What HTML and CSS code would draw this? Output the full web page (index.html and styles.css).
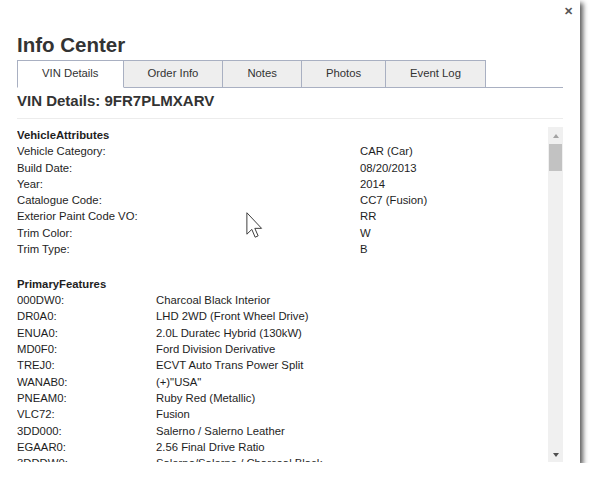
FILE: index.html
```html
<!DOCTYPE html>
<html lang="en">
<head>
    <meta charset="UTF-8">
    <title>Info Center</title>
    <link rel="stylesheet" href="styles.css">
</head>
<body>
    <div class="dialog">
        <span class="close">&#x2715;</span>
        <h1 class="title">Info Center</h1>
        <ul class="tabs">
            <li class="tab active">VIN Details</li>
            <li class="tab">Order Info</li>
            <li class="tab">Notes</li>
            <li class="tab">Photos</li>
            <li class="tab">Event Log</li>
        </ul>
        <h2 class="vin">VIN Details: 9FR7PLMXARV</h2>
        <div class="scroll">
            <div class="scroll-content">
                <div class="section attrs">
                    <div class="section-title">VehicleAttributes</div>
                    <div class="rows">
                        <span>Vehicle Category:</span><span>CAR (Car)</span>
                        <span>Build Date:</span><span>08/20/2013</span>
                        <span>Year:</span><span>2014</span>
                        <span>Catalogue Code:</span><span>CC7 (Fusion)</span>
                        <span>Exterior Paint Code VO:</span><span>RR</span>
                        <span>Trim Color:</span><span>W</span>
                        <span>Trim Type:</span><span>B</span>
                    </div>
                </div>
                <div class="section features">
                    <div class="section-title">PrimaryFeatures</div>
                    <div class="rows">
                        <span>000DW0:</span><span>Charcoal Black Interior</span>
                        <span>DR0A0:</span><span>LHD 2WD (Front Wheel Drive)</span>
                        <span>ENUA0:</span><span>2.0L Duratec Hybrid (130kW)</span>
                        <span>MD0F0:</span><span>Ford Division Derivative</span>
                        <span>TREJ0:</span><span>ECVT Auto Trans Power Split</span>
                        <span>WANAB0:</span><span>(+)"USA"</span>
                        <span>PNEAM0:</span><span>Ruby Red (Metallic)</span>
                        <span>VLC72:</span><span>Fusion</span>
                        <span>3DD000:</span><span>Salerno / Salerno Leather</span>
                        <span>EGAAR0:</span><span>2.56 Final Drive Ratio</span>
                        <span>3DDDW0:</span><span>Salerno/Salerno / Charcoal Black</span>
                    </div>
                </div>
            </div>
            <div class="scrollbar">
                <span class="arrow up"></span>
                <span class="thumb"></span>
                <span class="track-fill"></span>
                <span class="arrow down"></span>
            </div>
        </div>
        <svg class="cursor" width="19" height="27" viewBox="0 0 12.5 18">
            <path d="M0.5 0.5 L0.5 14.8 L3.8 11.6 L6 16.8 L8 15.9 L5.8 10.9 L10.3 10.9 Z" fill="#fff" stroke="#3a3a3a" stroke-width="0.65" stroke-linejoin="miter"/>
        </svg>
    </div>
</body>
</html>
```

FILE: styles.css
```css
* {
    box-sizing: border-box;
}
body {
    margin: 0;
    background-color: #ffffff;
    font-family: "Liberation Sans", Arial, sans-serif;
    color: #1e1e1e;
}
.dialog {
    position: relative;
    width: 580px;
    height: 463px;
    padding: 33px 17px 1px 17px;
    background-color: #ffffff;
    box-shadow: 3px 3px 5px rgba(0,0,0,0.65);
    display: flex;
    flex-direction: column;
}
.close {
    position: absolute;
    top: 5px;
    right: 7px;
    font-size: 11px;
    font-weight: bold;
    color: #555;
}
.title {
    margin: 0;
    font-size: 20.5px;
    line-height: 24px;
    font-weight: bold;
    color: #333;
}
.tabs {
    display: flex;
    margin: 3px 0 0 0;
    padding: 0;
    list-style: none;
    border-bottom: 1px solid #a9b0c2;
}
.tab {
    height: 28px;
    margin-bottom: -1px;
    padding: 0 24px 2px 24px;
    border: 1px solid #a9b0c2;
    border-left: none;
    background-color: #eeeeee;
    font-size: 11.3px;
    line-height: 24px;
    white-space: nowrap;
    color: #333;
}
.tab:first-child {
    border-left: 1px solid #a9b0c2;
}
.tab.active {
    background-color: #ffffff;
    border-bottom-color: #ffffff;
}
.vin {
    margin: 4px 0 0 0;
    padding-bottom: 8px;
    border-bottom: 1px solid #ececec;
    font-size: 15px;
    line-height: 18px;
    font-weight: bold;
    color: #333;
}
.scroll {
    flex: 1;
    margin-top: 8px;
    display: flex;
    overflow: hidden;
}
.scroll-content {
    flex: 1;
    overflow: hidden;
    font-size: 11.3px;
    line-height: 16.3px;
}
.section {
    margin-bottom: 18.5px;
}
.section-title {
    font-weight: bold;
}
.rows {
    display: grid;
}
.attrs .rows {
    grid-template-columns: 343px 1fr;
}
.features .rows {
    grid-template-columns: 139px 1fr;
}
.rows span {
    white-space: nowrap;
}
.scrollbar {
    width: 15px;
    display: flex;
    flex-direction: column;
    align-items: center;
    background-color: #f0f0f0;
}
.arrow {
    width: 0;
    height: 0;
    border-left: 3.5px solid transparent;
    border-right: 3.5px solid transparent;
}
.arrow.up {
    margin-top: 7px;
    border-bottom: 4px solid #a3a3a3;
}
.thumb {
    width: 13px;
    height: 27px;
    margin-top: 6px;
    background-color: #c2c2c2;
}
.track-fill {
    flex: 1;
}
.arrow.down {
    margin-bottom: 5px;
    border-top: 4px solid #505050;
}
.cursor {
    position: absolute;
    left: 246px;
    top: 212px;
}
```
